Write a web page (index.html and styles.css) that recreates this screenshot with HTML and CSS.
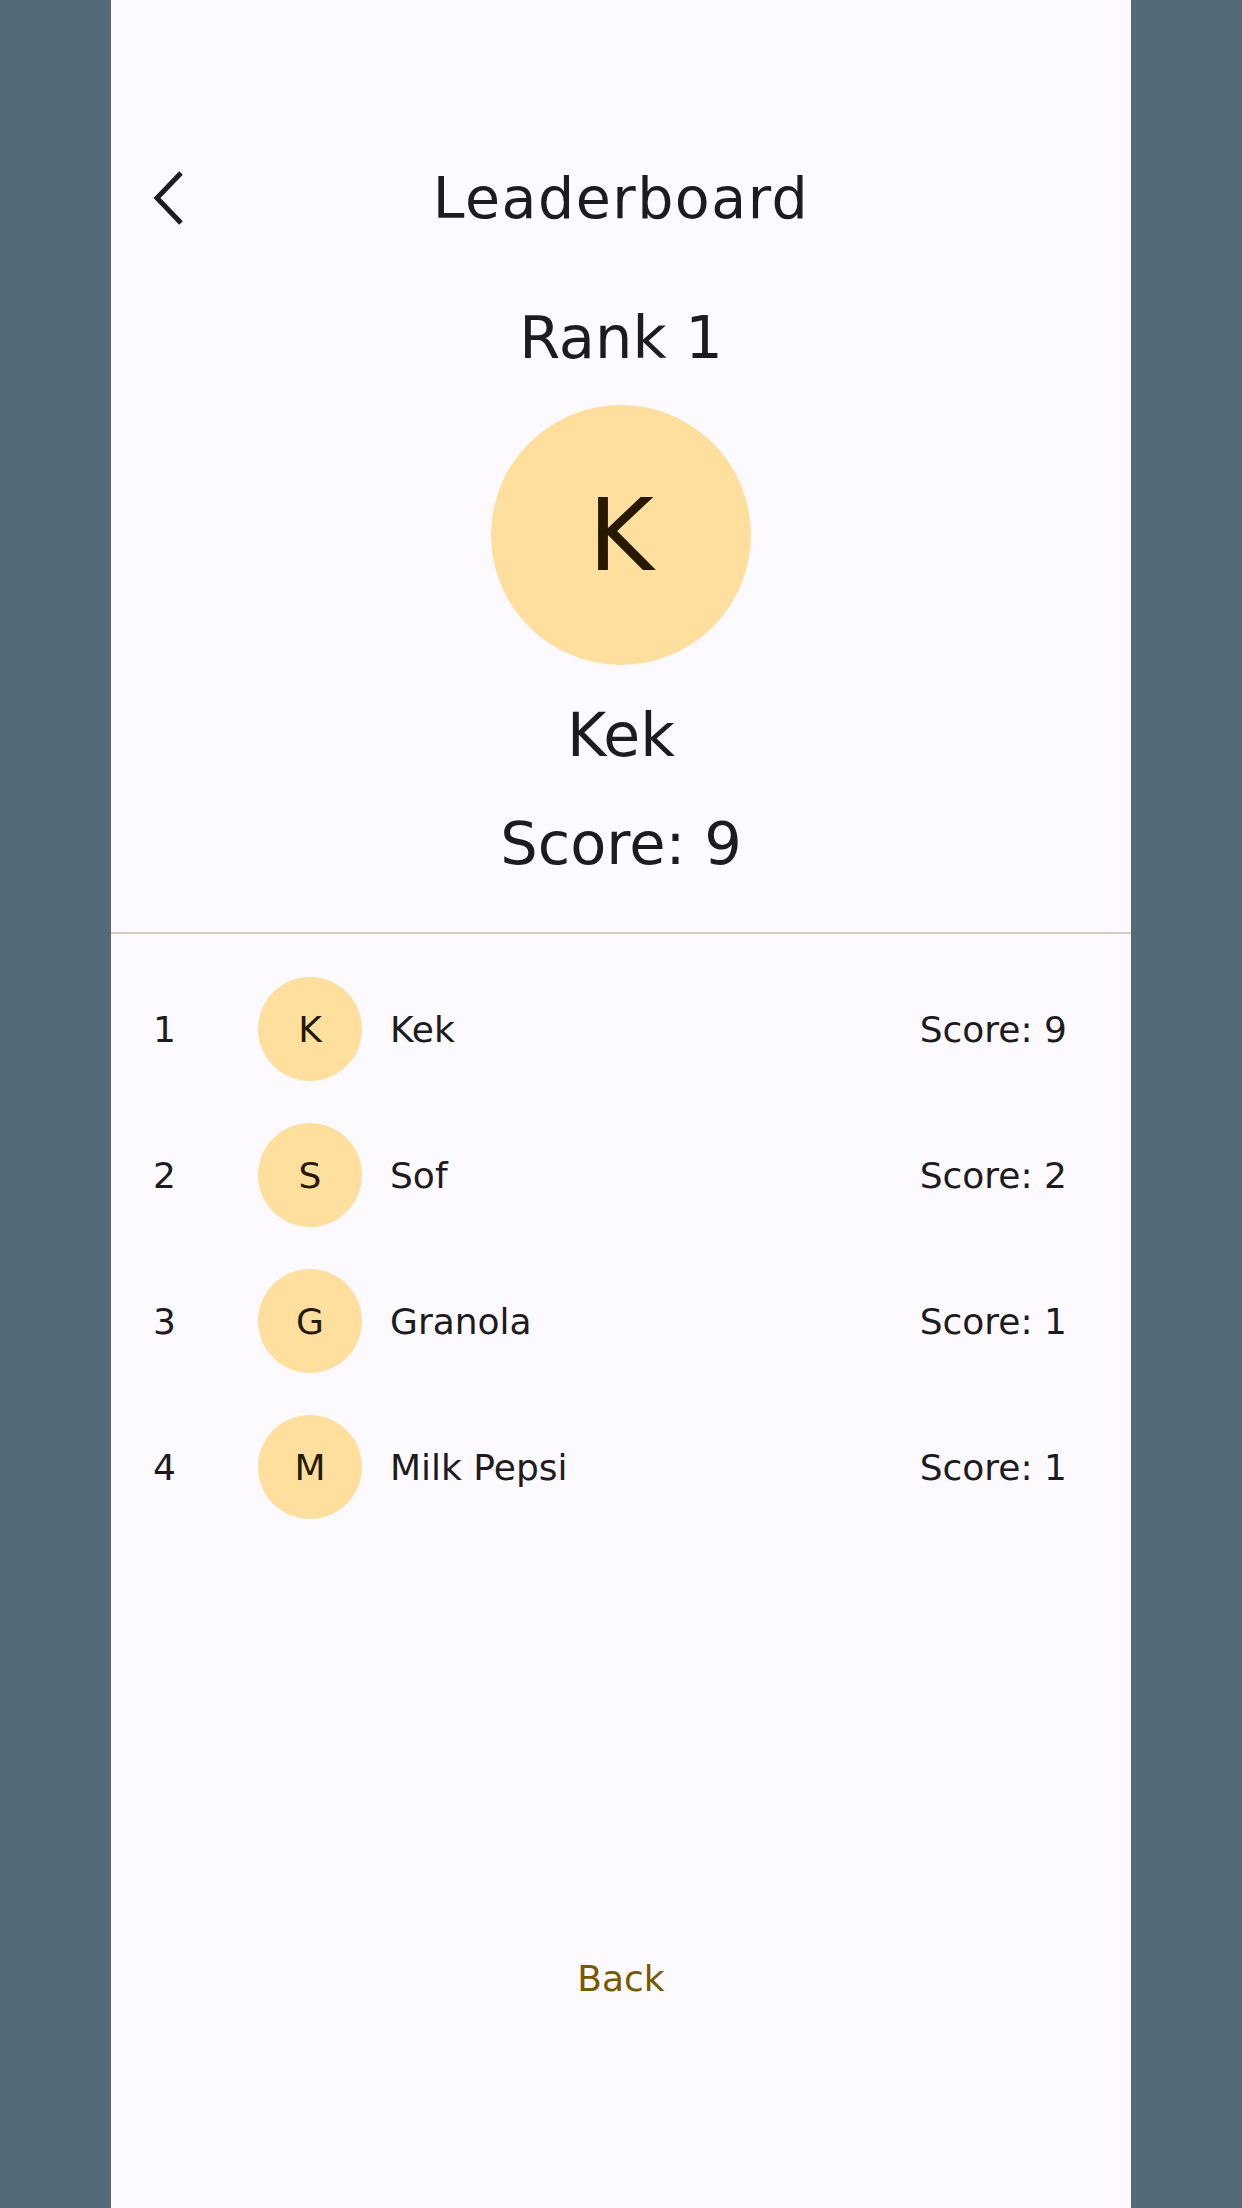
FILE: index.html
```html
<!DOCTYPE html>
<html>
<head>
<meta charset="utf-8">
<link rel="stylesheet" href="styles.css">
<title>Leaderboard</title>
</head>
<body>
<div class="frame">
  <div class="side"></div>
  <main class="screen">
    <header class="topbar">
      <div class="back-icon">
        <svg width="32" height="54" viewBox="0 0 32 54" aria-hidden="true">
          <path d="M29 2 L5 27 L29 52" fill="none" stroke="#1d1b1e" stroke-width="5"/>
        </svg>
      </div>
      <h1 class="title">Leaderboard</h1>
      <div></div>
    </header>

    <section class="hero">
      <div class="rank">Rank 1</div>
      <div class="avatar-lg">K</div>
      <div class="hero-name">Kek</div>
      <div class="hero-score">Score: 9</div>
    </section>

    <div class="divider"></div>

    <ul class="list">
      <li class="row">
        <span class="pos">1</span>
        <span class="avatar">K</span>
        <span class="name">Kek</span>
        <span class="score">Score: 9</span>
      </li>
      <li class="row">
        <span class="pos">2</span>
        <span class="avatar">S</span>
        <span class="name">Sof</span>
        <span class="score">Score: 2</span>
      </li>
      <li class="row">
        <span class="pos">3</span>
        <span class="avatar">G</span>
        <span class="name">Granola</span>
        <span class="score">Score: 1</span>
      </li>
      <li class="row">
        <span class="pos">4</span>
        <span class="avatar">M</span>
        <span class="name">Milk Pepsi</span>
        <span class="score">Score: 1</span>
      </li>
    </ul>

    <div class="back-btn">Back</div>
  </main>
  <div class="side"></div>
</div>
</body>
</html>
```

FILE: styles.css
```css
html, body {
  margin: 0;
  padding: 0;
}

body {
  font-family: "DejaVu Sans", "Noto Sans", sans-serif;
  color: #1d1b1e;
  background: #546a78;
}

.frame {
  display: flex;
  width: 1242px;
  height: 2208px;
}

.side {
  width: 111px;
  flex: none;
  background: #546a78;
}

.screen {
  flex: 1;
  display: flex;
  flex-direction: column;
  background: #fdfaff;
  height: 2208px;
}

.topbar {
  margin-top: 166px;
  height: 64px;
  display: grid;
  grid-template-columns: 1fr auto 1fr;
  align-items: center;
}

.back-icon {
  padding-left: 41px;
  display: flex;
  align-items: center;
  height: 64px;
}

.title {
  margin: 0;
  font-weight: normal;
  font-size: 57px;
  line-height: 64px;
  letter-spacing: 1.5px;
}

.hero {
  display: flex;
  flex-direction: column;
  align-items: center;
  margin-top: 73px;
}

.rank {
  font-size: 59px;
  line-height: 70px;
}

.avatar-lg {
  margin-top: 32px;
  width: 260px;
  height: 260px;
  border-radius: 50%;
  background: #ffdf9e;
  color: #261900;
  font-size: 100px;
  display: flex;
  align-items: center;
  justify-content: center;
}

.hero-name {
  margin-top: 35px;
  font-size: 60px;
  line-height: 70px;
}

.hero-score {
  margin-top: 39px;
  font-size: 59px;
  line-height: 70px;
}

.divider {
  margin-top: 53px;
  height: 2px;
  background: #d8cabd;
}

.list {
  list-style: none;
  margin: 43px 0 0;
  padding: 0;
  display: flex;
  flex-direction: column;
  gap: 42px;
}

.row {
  display: flex;
  align-items: center;
  height: 104px;
  padding-left: 42px;
  padding-right: 64px;
  font-size: 36px;
}

.pos {
  width: 105px;
  flex: none;
}

.avatar {
  width: 104px;
  height: 104px;
  flex: none;
  border-radius: 50%;
  background: #ffdf9e;
  color: #261900;
  display: flex;
  align-items: center;
  justify-content: center;
  font-size: 36px;
}

.name {
  margin-left: 28px;
  flex: 1;
}

.score {
  text-align: right;
}

.back-btn {
  margin-top: auto;
  margin-bottom: 209px;
  align-self: center;
  font-size: 36px;
  line-height: 41px;
  color: #785a00;
}
```
